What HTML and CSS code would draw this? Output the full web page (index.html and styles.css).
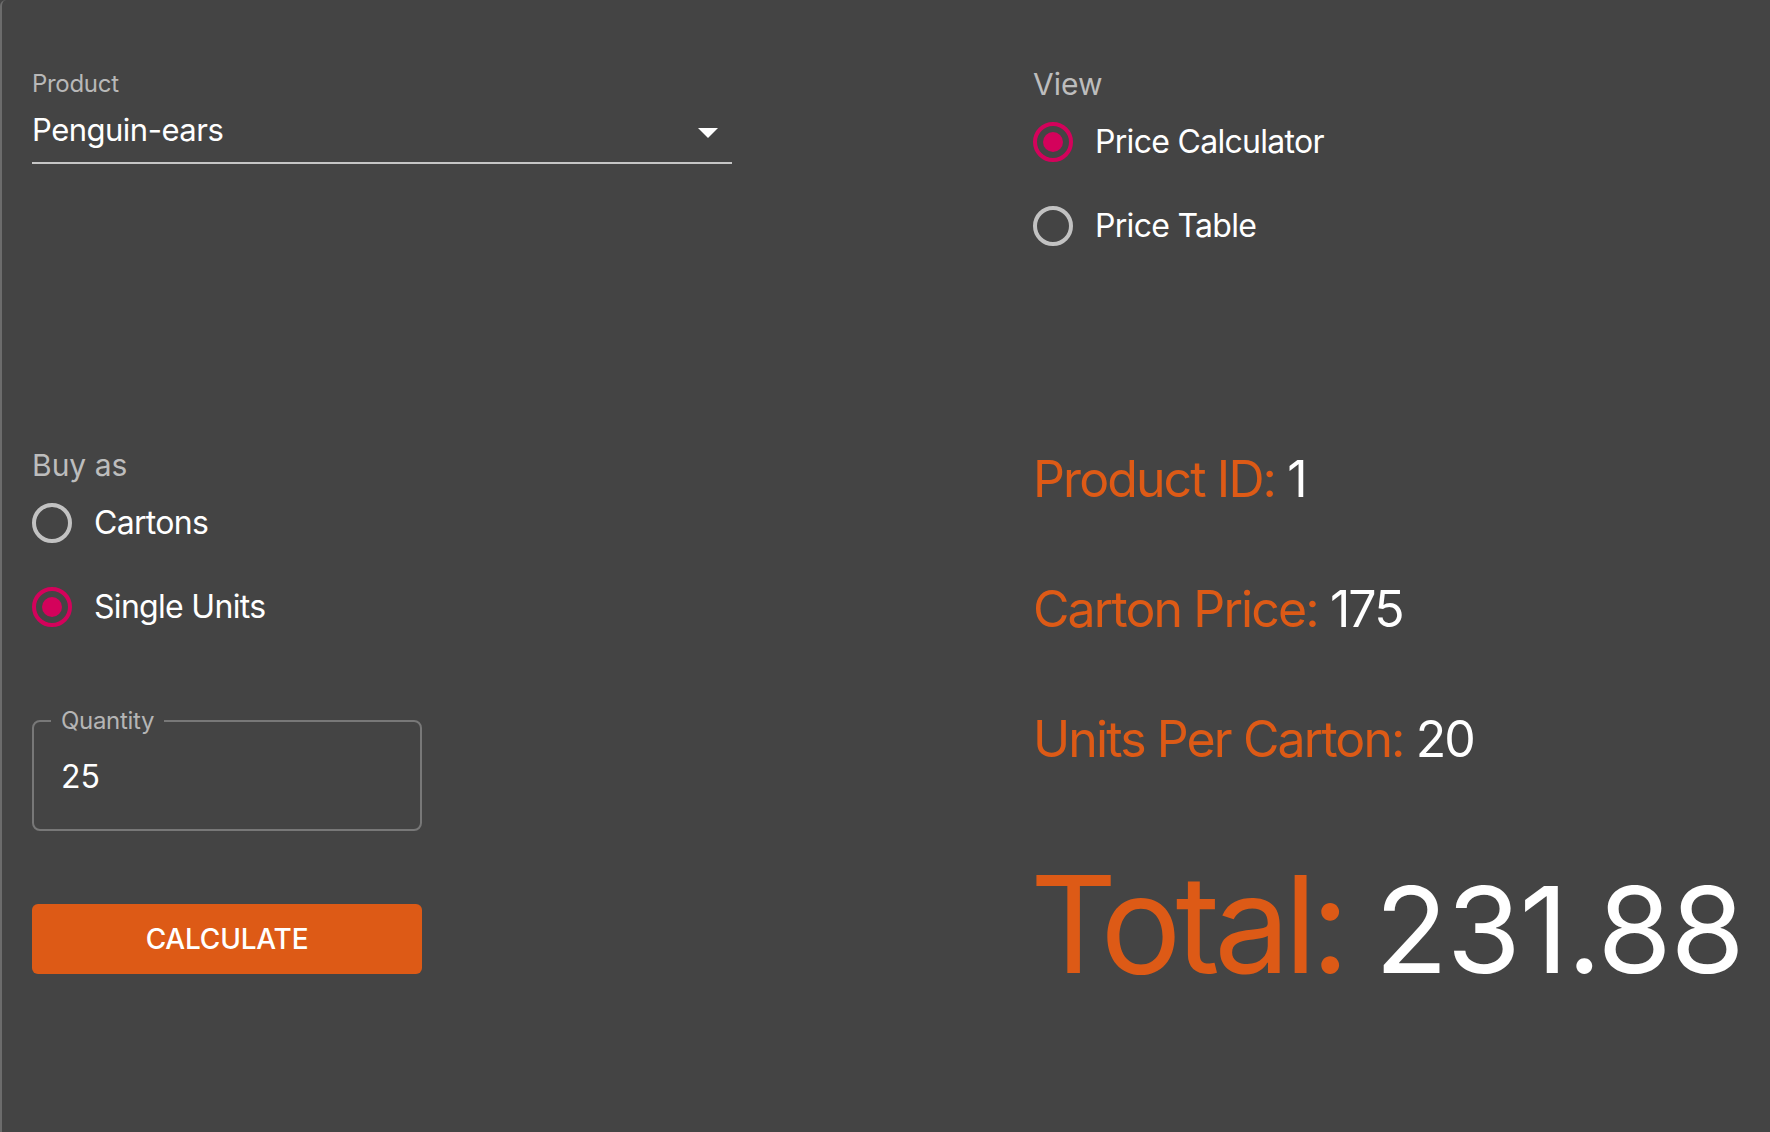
FILE: index.html
```html
<!DOCTYPE html>
<html lang="en">
<head>
<meta charset="utf-8">
<title>Price Calculator</title>
<link rel="stylesheet" href="styles.css">
</head>
<body>
<div class="app">
  <section class="select">
    <div class="select-label">Product</div>
    <div class="select-field">
      <span class="select-value">Penguin-ears</span>
      <svg class="select-arrow" width="20" height="10" viewBox="0 0 20 10"><path d="M0 0 L10 10 L20 0 Z" fill="#fff"/></svg>
    </div>
  </section>

  <section class="group view">
    <div class="group-label">View</div>
    <div class="radio-row"><span class="radio checked"></span><span class="radio-text">Price Calculator</span></div>
    <div class="radio-row"><span class="radio"></span><span class="radio-text">Price Table</span></div>
  </section>

  <section class="group buy">
    <div class="group-label">Buy as</div>
    <div class="radio-row"><span class="radio"></span><span class="radio-text">Cartons</span></div>
    <div class="radio-row"><span class="radio checked"></span><span class="radio-text">Single Units</span></div>

    <fieldset class="qty">
      <legend class="qty-label">Quantity</legend>
      <div class="qty-value">25</div>
    </fieldset>

    <button class="calc-btn" type="button">CALCULATE</button>
  </section>

  <section class="info">
    <div class="info-row"><span class="key">Product ID:</span> <span class="val">1</span></div>
    <div class="info-row"><span class="key">Carton Price:</span> <span class="val">175</span></div>
    <div class="info-row"><span class="key">Units Per Carton:</span> <span class="val">20</span></div>
    <div class="total"><span class="total-key">Total:</span><span class="total-val">231.88</span></div>
  </section>
</div>
</body>
</html>
```

FILE: styles.css
```css
html, body {
  margin: 0;
  padding: 0;
  background: #444444;
}

body {
  font-family: Inter, "Noto Sans", "DejaVu Sans", sans-serif;
  color: #ffffff;
}

.app {
  box-sizing: border-box;
  min-height: 1132px;
  border-left: 2px solid #6c6c6c;
  border-top-left-radius: 6px;
  padding-left: 30px;
  display: grid;
  grid-template-columns: 1001px 1fr;
  grid-template-rows: 400px auto;
}

/* Select */
.select {
  width: 700px;
  margin-top: 72px;
}

.select-label {
  font-size: 24px;
  line-height: 24px;
  color: #b8b8b8;
  letter-spacing: -0.3px;
}

.select-field {
  display: flex;
  align-items: center;
  justify-content: space-between;
  margin-top: 14px;
  padding-bottom: 12px;
  border-bottom: 2px solid #c6c6c6;
}

.select-value {
  font-size: 31px;
  line-height: 40px;
  letter-spacing: -0.5px;
}

.select-arrow {
  margin-right: 14px;
  margin-top: 5px;
}

/* Radio groups */
.group-label {
  font-size: 30px;
  line-height: 31px;
  color: #bdbdbd;
}

.view .group-label {
  margin-top: 69px;
}

.buy .group-label {
  margin-top: 49px;
  line-height: 32px;
}

.radio-row {
  height: 84px;
  display: flex;
  align-items: center;
  gap: 22px;
}

.radio {
  box-sizing: border-box;
  width: 40px;
  height: 40px;
  border-radius: 50%;
  border: 4px solid #c2c2c2;
  display: flex;
  align-items: center;
  justify-content: center;
}

.radio.checked {
  border-color: #d4025b;
}

.radio.checked::after {
  content: "";
  width: 20px;
  height: 20px;
  border-radius: 50%;
  background: #d4025b;
}

.radio-text {
  font-size: 32px;
  line-height: 40px;
  letter-spacing: -0.7px;
}

/* Quantity */
.qty {
  box-sizing: border-box;
  width: 390px;
  margin: 60px 0 0 0;
  padding: 24px 20px 32px 27px;
  border: 2px solid #787878;
  border-radius: 8px;
  min-inline-size: 0;
}

.qty-label {
  font-size: 24px;
  line-height: 24px;
  color: #b5b5b5;
  padding: 0 10px;
  margin-left: -10px;
  letter-spacing: -0.3px;
}

.qty-value {
  font-size: 32px;
  line-height: 40px;
}

/* Button */
.calc-btn {
  display: block;
  width: 390px;
  height: 70px;
  margin-top: 73px;
  border: none;
  border-radius: 6px;
  background: #dd5a16;
  color: #ffffff;
  font-family: Inter, "Noto Sans", sans-serif;
  font-size: 28px;
  font-weight: 500;
  letter-spacing: -0.2px;
  padding: 0;
}

/* Info */
.info {
  margin-top: 13.5px;
}

.info-row {
  font-size: 50px;
  line-height: 130px;
  white-space: nowrap;
  letter-spacing: -1.9px;
}

.key {
  color: #dd5a16;
}

.val {
  color: #ffffff;
}

.total {
  display: flex;
  align-items: baseline;
  margin-top: 53px;
  margin-left: -3px;
  white-space: nowrap;
}

.total-key {
  font-size: 135px;
  line-height: 135px;
  color: #dd5a16;
  letter-spacing: -6px;
}

.total-val {
  font-size: 120px;
  line-height: 120px;
  margin-left: 31px;
  color: #ffffff;
  letter-spacing: -1.3px;
}
```
